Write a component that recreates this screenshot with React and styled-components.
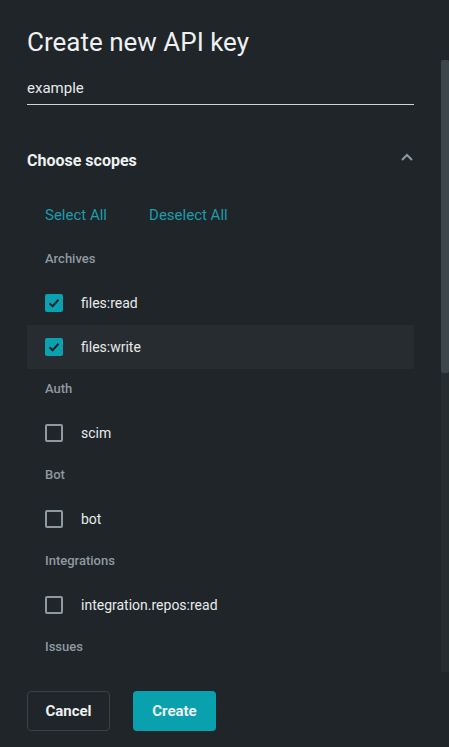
import React, { useState, useRef, useEffect } from 'react';
import styled, { createGlobalStyle } from 'styled-components';

const GlobalStyle = createGlobalStyle`
  html, body {
    margin: 0;
    padding: 0;
    background: #1f2528;
    font-family: Roboto, "Noto Sans", "Liberation Sans", sans-serif;
    color: #e7eaeb;
  }
  * {
    box-sizing: border-box;
  }
`;

const Modal = styled.div`
  width: 449px;
  height: 747px;
  display: flex;
  flex-direction: column;
  background: #1f2528;
`;

const Title = styled.h1`
  margin: 0;
  padding: 24px 27px 0;
  height: 60px;
  font-size: 26px;
  font-weight: 400;
  line-height: 36px;
  color: #eef0f1;
`;

const ScrollArea = styled.div`
  height: 612px;
  display: flex;
`;

const Scroller = styled.div`
  flex: 1;
  overflow-y: scroll;
  padding: 0 27px 24px;
  scrollbar-width: none;
  &::-webkit-scrollbar {
    display: none;
  }
`;

const Track = styled.div`
  width: 8px;
  background: #262d31;
`;

const Thumb = styled.div`
  width: 8px;
  height: 313px;
  background: #3b474d;
  border-radius: 2px;
`;

const NameInput = styled.input`
  display: block;
  width: 100%;
  height: 33px;
  margin-top: 12px;
  padding: 0;
  border: none;
  border-bottom: 1px solid #cfd4d6;
  background: transparent;
  color: #e7eaeb;
  font-family: inherit;
  font-size: 15px;
  outline: none;
`;

const SectionHeader = styled.div`
  margin-top: 25px;
  height: 60px;
  display: flex;
  align-items: center;
  justify-content: space-between;
  font-size: 16px;
  font-weight: 700;
  color: #eef0f1;
`;

const Chevron = styled.svg`
  width: 14px;
  height: 14px;
  margin-right: 0;
  margin-top: -6px;
`;

const BulkActions = styled.div`
  margin-top: 4px;
  height: 42px;
  display: flex;
  align-items: center;
  gap: 42px;
  padding-left: 18px;
`;

const LinkButton = styled.button`
  border: none;
  background: none;
  padding: 0;
  font-family: inherit;
  font-size: 15px;
  color: #1a9dab;
  cursor: pointer;
`;

const Groups = styled.div`
  margin-top: 3px;
`;

const GroupLabel = styled.div`
  height: 42px;
  display: flex;
  align-items: center;
  padding: 0 18px 4px;
  font-size: 13px;
  font-weight: 500;
  color: #8e9aa0;
`;

const Row = styled.label`
  height: 44px;
  display: flex;
  align-items: center;
  gap: 18px;
  padding-left: 18px;
  font-size: 14px;
  color: #e7eaeb;
  cursor: pointer;
  background: ${(p) => (p.$hover ? '#262c30' : 'transparent')};
`;

const Box = styled.span`
  width: 18px;
  height: 18px;
  border-radius: 2px;
  display: flex;
  align-items: center;
  justify-content: center;
  background: ${(p) => (p.$checked ? '#0aa2b0' : 'transparent')};
  border: ${(p) => (p.$checked ? 'none' : '2px solid #8d9aa1')};
`;

const Footer = styled.div`
  flex: 1;
  display: flex;
  align-items: flex-start;
  gap: 23px;
  padding: 19px 27px 0;
`;

const Button = styled.button`
  height: 40px;
  min-width: 83px;
  padding: 0 17px;
  border-radius: 4px;
  font-family: inherit;
  font-size: 15px;
  font-weight: 700;
  color: #eef0f1;
  cursor: pointer;
  background: ${(p) => (p.$primary ? '#0aa1af' : 'transparent')};
  border: ${(p) => (p.$primary ? 'none' : '1px solid #3a4247')};
`;

const groups = [
  { name: 'Archives', scopes: ['files:read', 'files:write'] },
  { name: 'Auth', scopes: ['scim'] },
  { name: 'Bot', scopes: ['bot'] },
  { name: 'Integrations', scopes: ['integration.repos:read'] },
  { name: 'Issues', scopes: ['issues:read', 'issues:write'] },
  { name: 'Members', scopes: ['members:read', 'members:write'] },
  { name: 'Sources', scopes: ['sources:read', 'sources:write'] },
  { name: 'Teams', scopes: ['teams:read', 'teams:write'] },
  { name: 'Users', scopes: ['users:read'] },
];

function Check({ checked }) {
  return (
    <Box $checked={checked}>
      {checked && (
        <svg width="12" height="10" viewBox="0 0 12 10">
          <path d="M1.5 5.2 L4.6 8.2 L10.5 1.8" fill="none" stroke="#16262b" strokeWidth="2" />
        </svg>
      )}
    </Box>
  );
}

export default function App() {
  const [selected, setSelected] = useState(['files:read', 'files:write']);
  const [thumb, setThumb] = useState({ top: 0, height: 313 });
  const scroller = useRef(null);
  const all = groups.flatMap((g) => g.scopes);
  const toggle = (s) =>
    setSelected((cur) => (cur.includes(s) ? cur.filter((x) => x !== s) : [...cur, s]));

  const measure = () => {
    const el = scroller.current;
    if (!el) return;
    const ratio = el.clientHeight / el.scrollHeight;
    setThumb({
      height: Math.round(el.clientHeight * ratio),
      top: Math.round(el.scrollTop * ratio),
    });
  };

  useEffect(measure, []);

  return (
    <>
      <GlobalStyle />
      <Modal>
        <Title>Create new API key</Title>
        <ScrollArea>
          <Scroller ref={scroller} onScroll={measure}>
            <NameInput defaultValue="example" />
            <SectionHeader>
              Choose scopes
              <Chevron viewBox="0 0 14 14">
                <path d="M2 10 L7 5 L12 10" fill="none" stroke="#8d9aa1" strokeWidth="2" />
              </Chevron>
            </SectionHeader>
            <BulkActions>
              <LinkButton onClick={() => setSelected(all)}>Select All</LinkButton>
              <LinkButton onClick={() => setSelected([])}>Deselect All</LinkButton>
            </BulkActions>
            <Groups>
              {groups.map((g) => (
                <div key={g.name}>
                  <GroupLabel>{g.name}</GroupLabel>
                  {g.scopes.map((s) => (
                    <Row key={s} $hover={s === 'files:write'} onClick={() => toggle(s)}>
                      <Check checked={selected.includes(s)} />
                      {s}
                    </Row>
                  ))}
                </div>
              ))}
            </Groups>
          </Scroller>
          <Track>
            <Thumb style={{ height: thumb.height, marginTop: thumb.top }} />
          </Track>
        </ScrollArea>
        <Footer>
          <Button>Cancel</Button>
          <Button $primary>Create</Button>
        </Footer>
      </Modal>
    </>
  );
}
